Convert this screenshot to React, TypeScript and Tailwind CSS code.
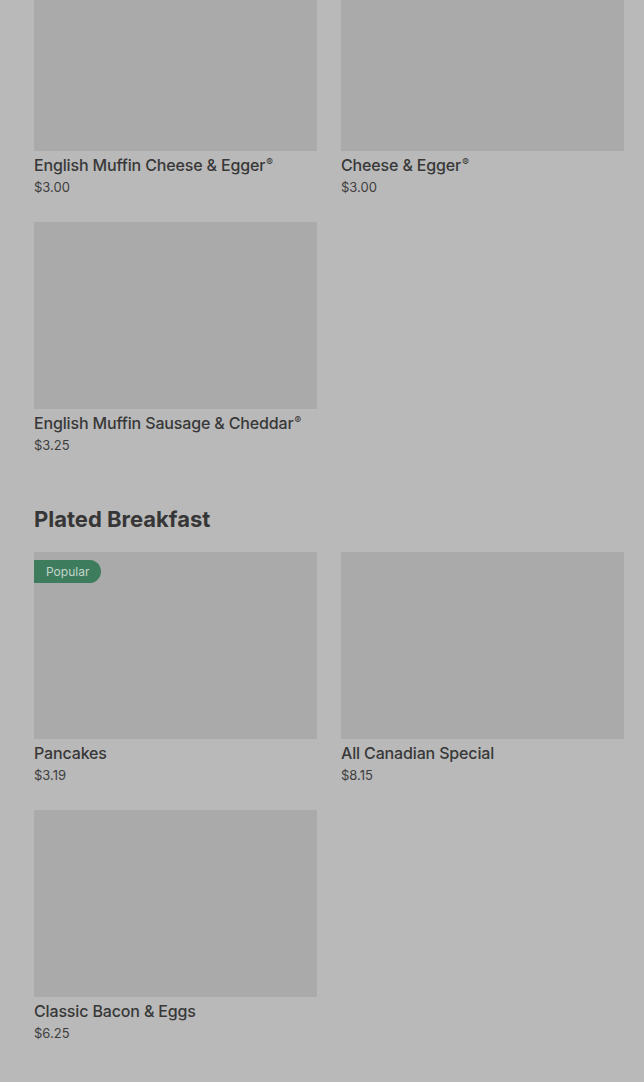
type Item = { name: string; price: string; popular?: boolean };

const sections: { title?: string; items: Item[]; first?: boolean }[] = [
  {
    first: true,
    items: [
      { name: 'English Muffin Cheese & Egger®', price: '$3.00' },
      { name: 'Cheese & Egger®', price: '$3.00' },
      { name: 'English Muffin Sausage & Cheddar®', price: '$3.25' },
    ],
  },
  {
    title: 'Plated Breakfast',
    items: [
      { name: 'Pancakes', price: '$3.19', popular: true },
      { name: 'All Canadian Special', price: '$8.15' },
      { name: 'Classic Bacon & Eggs', price: '$6.25' },
    ],
  },
];

function Name({ text }: { text: string }) {
  if (!text.endsWith('®')) return <>{text}</>;
  return (
    <>
      {text.slice(0, -1)}
      <sup className="ml-px text-[10px]">®</sup>
    </>
  );
}

function Card({ item }: { item: Item }) {
  return (
    <div className="flex flex-col">
      <div className="relative h-[187px] bg-[#aaaaaa]">
        {item.popular && (
          <span className="absolute left-0 top-2 flex h-[23px] items-center rounded-r-full bg-[#3d7c5c] pl-3 pr-3 text-[12px] text-[#c4d6cc]">
            Popular
          </span>
        )}
      </div>
      <div className="mt-1 text-[16px] leading-5 font-medium tracking-[-0.15px] text-[#383838]">
        <Name text={item.name} />
      </div>
      <div className="mt-[3px] text-[13px] leading-[18px] text-[#3e3e3e]">{item.price}</div>
    </div>
  );
}

export default function App() {
  return (
    <div className="min-h-[1082px] overflow-hidden bg-[#b9b9b9] pl-[34px] pr-5 font-['Inter',sans-serif]">
      {sections.map((s, i) => (
        <section key={i} className={s.first ? '-mt-9' : 'mt-[49px]'}>
          {s.title && (
            <h2 className="mb-[17px] text-[22px] leading-8 font-bold tracking-[0px] text-[#363636]">{s.title}</h2>
          )}
          <div className="grid grid-cols-2 gap-x-6 gap-y-[26px]">
            {s.items.map((it) => (
              <Card key={it.name} item={it} />
            ))}
          </div>
        </section>
      ))}
    </div>
  );
}
